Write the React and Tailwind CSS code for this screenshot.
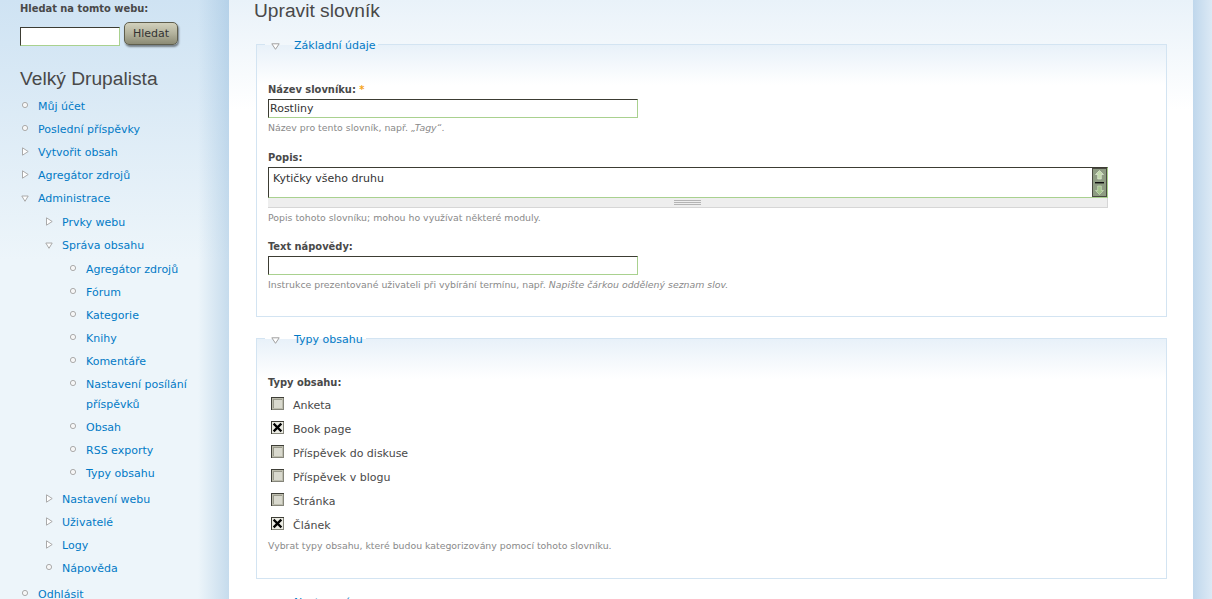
import React from 'react';

const BOLD = "font-['DejaVu_Sans_Condensed','DejaVu_Sans',sans-serif] font-bold";

function Leaf() {
  return (
    <svg width="8" height="8" viewBox="0 0 8 8" className="shrink-0 mt-[4px]">
      <circle cx="4" cy="4" r="2.6" fill="#f7f7f7" stroke="#ababab" strokeWidth="1" />
    </svg>
  );
}
function Collapsed() {
  return (
    <svg width="8" height="9" viewBox="0 0 8 9" className="shrink-0 mt-[4px]">
      <path d="M1.5 0.8 L7.2 4.5 L1.5 8.2 Z" fill="#ffffff" stroke="#aaaaaa" strokeWidth="1" strokeLinejoin="round" />
    </svg>
  );
}
function Expanded() {
  return (
    <svg width="8" height="7" viewBox="0 0 8 7" className="shrink-0 mt-[6px]">
      <path d="M0.8 1 L7.2 1 L4 6.3 Z" fill="#ffffff" stroke="#aaaaaa" strokeWidth="1" strokeLinejoin="round" />
    </svg>
  );
}

const leaf = (t) => ({ t, i: 'leaf' });
const col = (t) => ({ t, i: 'col' });

const MENU = [
  leaf('Můj účet'),
  leaf('Poslední příspěvky'),
  col('Vytvořit obsah'),
  col('Agregátor zdrojů'),
  {
    t: 'Administrace',
    i: 'exp',
    c: [
      col('Prvky webu'),
      {
        t: 'Správa obsahu',
        i: 'exp',
        c: [
          leaf('Agregátor zdrojů'),
          leaf('Fórum'),
          leaf('Kategorie'),
          leaf('Knihy'),
          leaf('Komentáře'),
          leaf('Nastavení posílání příspěvků'),
          leaf('Obsah'),
          leaf('RSS exporty'),
          leaf('Typy obsahu'),
        ],
      },
      col('Nastavení webu'),
      col('Uživatelé'),
      col('Logy'),
      leaf('Nápověda'),
    ],
  },
  leaf('Odhlásit'),
];

function MenuList({ items, nested }) {
  return (
    <ul className={nested ? 'ml-[24px] mt-[1px] mb-[3px]' : 'mt-[3px]'}>
      {items.map((it, idx) => (
        <li key={idx} className="pt-[3px]">
          <div className="flex items-start">
            <span className="ml-[1px] mr-[9px] w-[8px] shrink-0 flex justify-center">
              {it.i === 'leaf' ? <Leaf /> : it.i === 'col' ? <Collapsed /> : <Expanded />}
            </span>
            <a className="text-[#027ac6] text-[11px] leading-[20px] min-w-0">{it.t}</a>
          </div>
          {it.c && <MenuList items={it.c} nested />}
        </li>
      ))}
    </ul>
  );
}

function Checkbox({ checked }) {
  return (
    <svg width="13" height="13" viewBox="0 0 13 13" className="shrink-0 ml-[3px] mt-[1px] mr-[9px]">
      <rect x="0" y="0" width="13" height="13" fill="#85857a" />
      <path d="M0 0 H13 V1 H1 V13 H0 Z" fill="#3e3e37" />
      <rect x="1" y="1" width="11" height="11" fill={checked ? '#ecece4' : '#bdbdae'} />
      {!checked && <rect x="2" y="2" width="9" height="9" fill="#d9d9ce" />}
      {!checked && <path d="M2 2 H11 V3 H3 V11 H2 Z" fill="#9a9a8c" />}
      {checked && (
        <path d="M3.5 3.5 L9.5 9.5 M9.5 3.5 L3.5 9.5" stroke="#000000" strokeWidth="2.4" strokeLinecap="square" />
      )}
    </svg>
  );
}

function Scrollbar() {
  return (
    <svg width="15" height="29" viewBox="0 0 15 29" className="shrink-0">
      <rect x="0.5" y="0.5" width="14" height="28" fill="#8e9c83" stroke="#4a4a42" />
      <path d="M7.5 2.5 L11.5 6.5 H9.3 V11 H5.7 V6.5 H3.5 Z" fill="#c3d9ae" stroke="#e9f2df" strokeWidth="0.6" />
      <rect x="3" y="14" width="9" height="1.4" fill="#111111" />
      <path d="M7.5 26.5 L11.5 22.5 H9.3 V18 H5.7 V22.5 H3.5 Z" fill="#a3c28c" stroke="#d5e6c6" strokeWidth="0.6" />
    </svg>
  );
}

function Label({ children, className = '' }) {
  return (
    <div className={`${BOLD} text-[11px] leading-[19px] text-[#494949] ${className}`}>{children}</div>
  );
}

function Desc({ children }) {
  return <div className="text-[9.35px] leading-[20px] text-[#898989]">{children}</div>;
}

function Legend({ children, collapsed }) {
  return (
    <legend className="ml-[-3px] pl-[6px] pr-[3px] pt-[3px] leading-[14px]">
      <span className="flex items-center">
        {collapsed ? (
          <svg width="9" height="8" viewBox="0 0 9 8" className="mr-[14px]">
            <path d="M2 0.5 L7.5 4 L2 7.5 Z" fill="#ffffff" stroke="#a0a0a0" strokeWidth="1" strokeLinejoin="round" />
          </svg>
        ) : (
          <svg width="9" height="7" viewBox="0 0 9 7" className="mr-[14px]">
            <path d="M0.8 0.8 L8.2 0.8 L4.5 6.3 Z" fill="#ffffff" stroke="#a0a0a0" strokeWidth="1" strokeLinejoin="round" />
          </svg>
        )}
        <a className="text-[#027ac6] text-[11px]">{children}</a>
      </span>
    </legend>
  );
}

const INPUT_BORDER =
  'border border-t-[#3c3c33] border-l-[#3c3c33] border-b-[#a9d18f] border-r-[#a9d18f] bg-white';

const FIELDSET =
  'border border-[#d3e4f2] px-[11px] bg-[linear-gradient(180deg,#e8f1f9_0px,#ffffff_40px)]';

export default function App() {
  const types = [
    ['Anketa', false],
    ['Book page', true],
    ['Příspěvek do diskuse', false],
    ['Příspěvek v blogu', false],
    ['Stránka', false],
    ['Článek', true],
  ];
  return (
    <div className="w-full h-[599px] overflow-hidden flex font-['DejaVu_Sans',sans-serif] text-[#494949]">
      {/* Sidebar */}
      <aside className="w-[229px] shrink-0 pl-[20px] pr-[19px] pt-[2px] bg-[image:linear-gradient(90deg,rgba(255,255,255,0)_198px,rgba(150,188,220,0.45)_229px),linear-gradient(180deg,#cfe3f3_0px,#edf5fa_260px)]">
        <div className={`${BOLD} text-[11px] leading-[14px] text-[#494949]`}>Hledat na tomto webu:</div>
        <div className="flex items-start mt-[6px]">
          <div className={`mt-[5px] w-[100px] h-[19px] ${INPUT_BORDER}`} />
          <button className="ml-[4px] w-[54px] h-[23px] rounded-[5px] border border-[#5f5e4d] bg-linear-to-b from-[#d2d1bd] via-[#b3b29c] to-[#8c8b75] text-[11px] text-[#333333] leading-[20px] shadow-[1px_2px_2px_rgba(0,0,0,0.45)]">
            Hledat
          </button>
        </div>
        <h2 className="mt-[21px] font-['Liberation_Sans',Arial,sans-serif] text-[19.2px] leading-[24px] text-[#494949]">
          Velký Drupalista
        </h2>
        <MenuList items={MENU} />
      </aside>

      {/* Main */}
      <main className="flex-1 min-w-0 pl-[27px] pr-[26px] bg-[linear-gradient(180deg,#e9f2f9_0px,#ffffff_110px)]">
        <h2 className="ml-[-2px] font-['Liberation_Sans',Arial,sans-serif] text-[19.2px] leading-[21px] text-[#494949]">
          Upravit slovník
        </h2>

        <fieldset className={`mt-[15px] pt-[27px] pb-[21px] ${FIELDSET}`}>
          <Legend>Základní údaje</Legend>
          <Label>
            Název slovníku: <span className="text-[#f5a31a]">*</span>
          </Label>
          <div className={`w-[370px] h-[19px] ${INPUT_BORDER} pl-[1px] text-[11px] leading-[17px] text-[#333333]`}>
            Rostliny
          </div>
          <Desc>
            Název pro tento slovník, např. <em>„Tagy“</em>.
          </Desc>

          <Label className="mt-[10px]">Popis:</Label>
          <div className={`w-[840px] h-[31px] flex ${INPUT_BORDER}`}>
            <div className="flex-1 pl-[4px] pt-[1px] text-[11px] leading-[20px] text-[#333333]">Kytičky všeho druhu</div>
            <Scrollbar />
          </div>
          <div className="w-[840px] h-[10px] bg-[#eeeeee] border-b border-r border-[#d6d6d6] flex items-center justify-center">
            <svg width="27" height="5" viewBox="0 0 27 5">
              <path d="M0 0.5 H27 M0 2.5 H27 M0 4.5 H27" stroke="#b4b4b4" strokeWidth="1" />
            </svg>
          </div>
          <Desc>Popis tohoto slovníku; mohou ho využívat některé moduly.</Desc>

          <Label className="mt-[9px]">Text nápovědy:</Label>
          <div className={`w-[370px] h-[19px] ${INPUT_BORDER}`} />
          <Desc>
            Instrukce prezentované uživateli při vybírání termínu, např.{' '}
            <em>Napište čárkou oddělený seznam slov.</em>
          </Desc>
        </fieldset>

        <fieldset className={`mt-[13px] pt-[26px] pb-[22px] ${FIELDSET}`}>
          <Legend>Typy obsahu</Legend>
          <Label className="mb-[2px]">Typy obsahu:</Label>
          {types.map(([t, c]) => (
            <div key={t} className="flex items-start mt-[4px] h-[20px]">
              <Checkbox checked={c} />
              <span className="text-[11px] leading-[20px] text-[#494949]">{t}</span>
            </div>
          ))}
          <Desc>Vybrat typy obsahu, které budou kategorizovány pomocí tohoto slovníku.</Desc>
        </fieldset>

        <fieldset className={`mt-[14px] pt-[26px] pb-[20px] ${FIELDSET}`}>
          <Legend collapsed>Nastavení</Legend>
          <div className="h-[40px]" />
        </fieldset>
      </main>

      {/* Right edge */}
      <div className="w-[19px] shrink-0 bg-[linear-gradient(90deg,#bfd7ec,#dce9f5)]" />
    </div>
  );
}
